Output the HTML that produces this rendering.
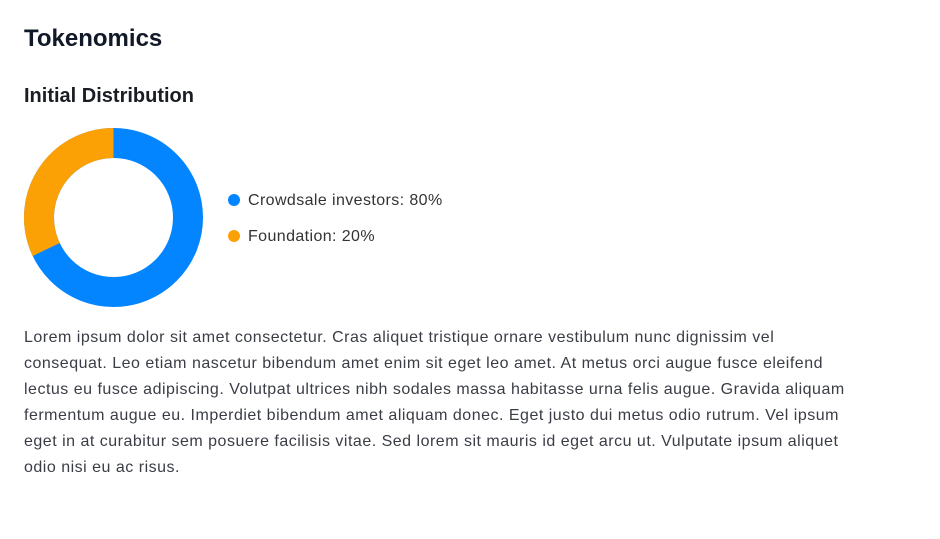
<!DOCTYPE html>
<html><head><style>
body{margin:0;background:#fff;font-family:"Liberation Sans",sans-serif;color:#1f2430;}
.h1{position:absolute;left:24px;top:25px;font-size:24px;font-weight:bold;color:#111827;letter-spacing:0px}
.h2{position:absolute;left:24px;top:85px;font-size:20px;font-weight:bold;color:#1a1d24;letter-spacing:0px}
.leg{position:absolute;left:228px;font-size:16px;color:#333;letter-spacing:0.4px}
.leg span{display:inline-block;width:12px;height:12px;border-radius:50%;vertical-align:-1px;margin-right:8px}
p{position:absolute;left:24px;top:325px;margin:0;font-size:16px;line-height:26.1px;color:#3a3d45;letter-spacing:0.5px;white-space:nowrap}
</style></head><body>
<div class="h1">Tokenomics</div>
<div class="h2">Initial Distribution</div>
<svg style="position:absolute;left:0;top:0" width="240" height="320">
<circle cx="113.5" cy="217.5" r="74.5" fill="none" stroke="#0385ff" stroke-width="30"/>
<path d="M46.2,249.5 A74.5,74.5 0 0 1 113.5,143" fill="none" stroke="#fba106" stroke-width="30"/>
</svg>
<div class="leg" style="top:192px"><span style="background:#0385ff"></span>Crowdsale investors: 80%</div>
<div class="leg" style="top:228px"><span style="background:#fba106"></span>Foundation: 20%</div>
<p>Lorem ipsum dolor sit amet consectetur. Cras aliquet tristique ornare vestibulum nunc dignissim vel<br>consequat. Leo etiam nascetur bibendum amet enim sit eget leo amet. At metus orci augue fusce eleifend<br>lectus eu fusce adipiscing. Volutpat ultrices nibh sodales massa habitasse urna felis augue. Gravida aliquam<br>fermentum augue eu. Imperdiet bibendum amet aliquam donec. Eget justo dui metus odio rutrum. Vel ipsum<br>eget in at curabitur sem posuere facilisis vitae. Sed lorem sit mauris id eget arcu ut. Vulputate ipsum aliquet<br>odio nisi eu ac risus.</p>
</body></html>
